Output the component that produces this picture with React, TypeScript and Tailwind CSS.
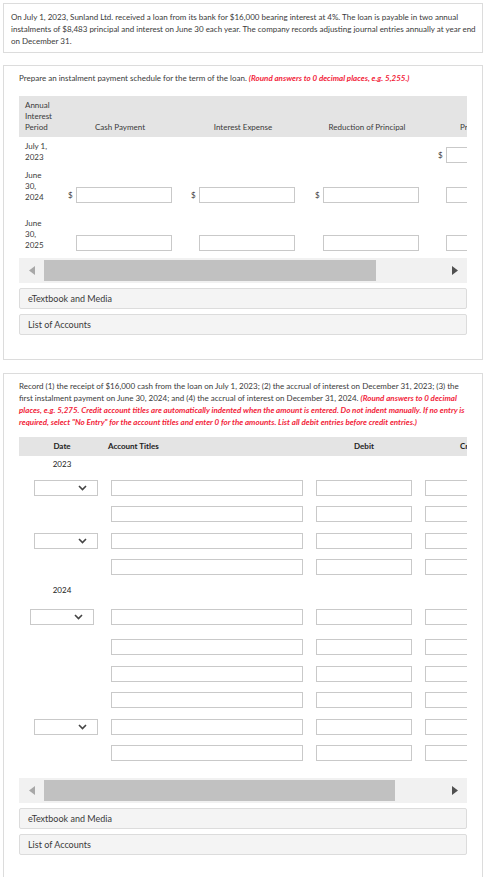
import React from "react";

const red = "font-bold italic text-[#f2243a]";

function Chevron() {
  return (
    <svg width="9" height="6" viewBox="0 0 9 6" className="text-[#444]">
      <path d="M1 1l3.5 3.5L8 1" fill="none" stroke="currentColor" strokeWidth="1.6" />
    </svg>
  );
}

function Box({ w }: { w: string }) {
  return <div className={`${w} h-[16px] shrink-0 border border-[#c9c9c9] bg-white`} />;
}

function ScrollBar({ thumb }: { thumb: string }) {
  return (
    <div className="flex h-[25px] items-center bg-[#f1f1f1]">
      <div className="flex w-[25px] shrink-0 justify-center">
        <svg width="6" height="9" viewBox="0 0 6 9">
          <path d="M6 0v9L0 4.5z" fill="#a8a8a8" />
        </svg>
      </div>
      <div className={`${thumb} h-[21px] shrink-0 bg-[#c1c1c1]`} />
      <div className="flex-1" />
      <div className="flex w-[25px] shrink-0 justify-center">
        <svg width="6" height="9" viewBox="0 0 6 9">
          <path d="M0 0v9l6-4.5z" fill="#505050" />
        </svg>
      </div>
    </div>
  );
}

function Links() {
  return (
    <>
      <div className="mt-[5px] flex h-[21px] items-center rounded-[2px] border border-[#dcdcdc] bg-[#f4f4f4] pl-[8px] text-[9px]">
        eTextbook and Media
      </div>
      <div className="mt-[5px] flex h-[21px] items-center rounded-[2px] border border-[#dcdcdc] bg-[#f4f4f4] pl-[8px] text-[9px]">
        List of Accounts
      </div>
    </>
  );
}

function Money({ dollar, ml }: { dollar: boolean; ml: string }) {
  return (
    <div className={`flex w-[104px] shrink-0 items-center ${ml}`}>
      <span className="w-[8px] shrink-0">{dollar ? "$" : ""}</span>
      <Box w="w-[96px]" />
    </div>
  );
}

type JRow = { mt: string; select?: "std" | "shift" };

const jrows: (JRow | { label: string; mt: string })[] = [
  { label: "2023", mt: "mt-[3px]" },
  { mt: "mt-[10px]", select: "std" },
  { mt: "mt-[10px]" },
  { mt: "mt-[11px]", select: "std" },
  { mt: "mt-[10px]" },
  { label: "2024", mt: "mt-[10px]" },
  { mt: "mt-[13px]", select: "shift" },
  { mt: "mt-[14px]" },
  { mt: "mt-[11px]" },
  { mt: "mt-[10px]" },
  { mt: "mt-[11px]", select: "std" },
  { mt: "mt-[10px]" },
];

export default function App() {
  return (
    <div className="min-h-[877px] w-[489px] bg-white pl-[3px] pr-[6px] pt-[3px] font-['Lato','Liberation_Sans',sans-serif] text-[8px] leading-[12px] text-[#3a3a3a]">
      <div className="whitespace-nowrap border border-[#dcdcdc] pb-[5px] pl-[7px] pt-[7px]">
        On July 1, 2023, Sunland Ltd. received a loan from its bank for $16,000 bearing interest at 4%. The loan is payable in two annual
        <br />
        instalments of $8,483 principal and interest on June 30 each year. The company records adjusting journal entries annually at year end
        <br />
        on December 31.
      </div>

      <div className="mt-[12px] border border-[#dcdcdc] px-[15px] pb-[24px] pt-[6px]">
        <p>
          Prepare an instalment payment schedule for the term of the loan.{" "}
          <span className={red}>(Round answers to 0 decimal places, e.g. 5,255.)</span>
        </p>
        <div className="mt-[12px] overflow-hidden">
          <div className="w-[580px] leading-[11px]">
            <div className="flex h-[41px] items-end bg-[#e4e4e4] pb-[4px]">
              <div className="w-[49px] shrink-0 pl-[6px]">
                Annual
                <br />
                Interest
                <br />
                Period
              </div>
              <div className="w-[104px] shrink-0 text-center">Cash Payment</div>
              <div className="ml-[19px] w-[104px] shrink-0 text-center">Interest Expense</div>
              <div className="ml-[20px] w-[104px] shrink-0 text-center">Reduction of Principal</div>
              <div className="ml-[19px] w-[104px] shrink-0 pl-[22px]">Principal Balance</div>
            </div>
            <div className="flex items-end pb-[3px] pt-[4px]">
              <div className="w-[49px] shrink-0 pl-[6px]">
                July 1,
                <br />
                2023
              </div>
              <div className="w-[104px] shrink-0" />
              <div className="ml-[19px] w-[104px] shrink-0" />
              <div className="ml-[20px] w-[104px] shrink-0" />
              <Money dollar ml="ml-[19px]" />
            </div>
            <div className="flex items-end pb-[11px] pt-[4px]">
              <div className="w-[49px] shrink-0 pl-[6px]">
                June
                <br />
                30,
                <br />
                2024
              </div>
              <Money dollar ml="" />
              <Money dollar ml="ml-[19px]" />
              <Money dollar ml="ml-[20px]" />
              <Money dollar={false} ml="ml-[19px]" />
            </div>
            <div className="flex items-end pb-[7px] pt-[4px]">
              <div className="w-[49px] shrink-0 pl-[6px]">
                June
                <br />
                30,
                <br />
                2025
              </div>
              <Money dollar={false} ml="" />
              <Money dollar={false} ml="ml-[19px]" />
              <Money dollar={false} ml="ml-[20px]" />
              <Money dollar={false} ml="ml-[19px]" />
            </div>
          </div>
        </div>
        <ScrollBar thumb="w-[332px]" />
        <Links />
      </div>

      <div className="mt-[13px] border border-b-0 border-[#dcdcdc] px-[15px] pb-[24px] pt-[6px]">
        <p>
          Record (1) the receipt of $16,000 cash from the loan on July 1, 2023; (2) the accrual of interest on December 31, 2023; (3) the
          first instalment payment on June 30, 2024; and (4) the accrual of interest on December 31, 2024.{" "}
          <span className={red}>
            (Round answers to 0 decimal places, e.g. 5,275. Credit account titles are automatically indented when the amount is entered. Do not
            indent manually. If no entry is required, select "No Entry" for the account titles and enter 0 for the amounts. List all debit
            entries before credit entries.)
          </span>
        </p>
        <div className="mt-[9px] overflow-hidden">
          <div className="w-[560px] leading-[11px]">
            <div className="flex h-[19px] items-center bg-[#e4e4e4] font-bold text-[#222]">
              <div className="w-[86px] shrink-0 text-center">Date</div>
              <div className="w-[198px] shrink-0 pl-[3px]">Account Titles</div>
              <div className="ml-[13px] w-[96px] shrink-0 text-center">Debit</div>
              <div className="ml-[13px] w-[96px] shrink-0 pl-[35px]">Credit</div>
            </div>
            {jrows.map((r, i) =>
              "label" in r ? (
                <div key={i} className={`${r.mt} w-[86px] text-center text-[#222]`}>
                  {r.label}
                </div>
              ) : (
                <div key={i} className={`${r.mt} flex items-center`}>
                  <div className="w-[86px] shrink-0">
                    {r.select && (
                      <div
                        className={`${r.select === "shift" ? "ml-[11px]" : "ml-[15px]"} flex h-[16px] w-[64px] items-center justify-end border border-[#c9c9c9] bg-white pr-[10px]`}
                      >
                        <Chevron />
                      </div>
                    )}
                  </div>
                  <div className="w-[198px] shrink-0 pl-[6px]">
                    <Box w="w-[192px]" />
                  </div>
                  <div className="ml-[13px]">
                    <Box w="w-[96px]" />
                  </div>
                  <div className="ml-[13px]">
                    <Box w="w-[96px]" />
                  </div>
                </div>
              ),
            )}
          </div>
        </div>
        <div className="mt-[17px]">
          <ScrollBar thumb="w-[351px]" />
        </div>
        <Links />
      </div>
    </div>
  );
}
